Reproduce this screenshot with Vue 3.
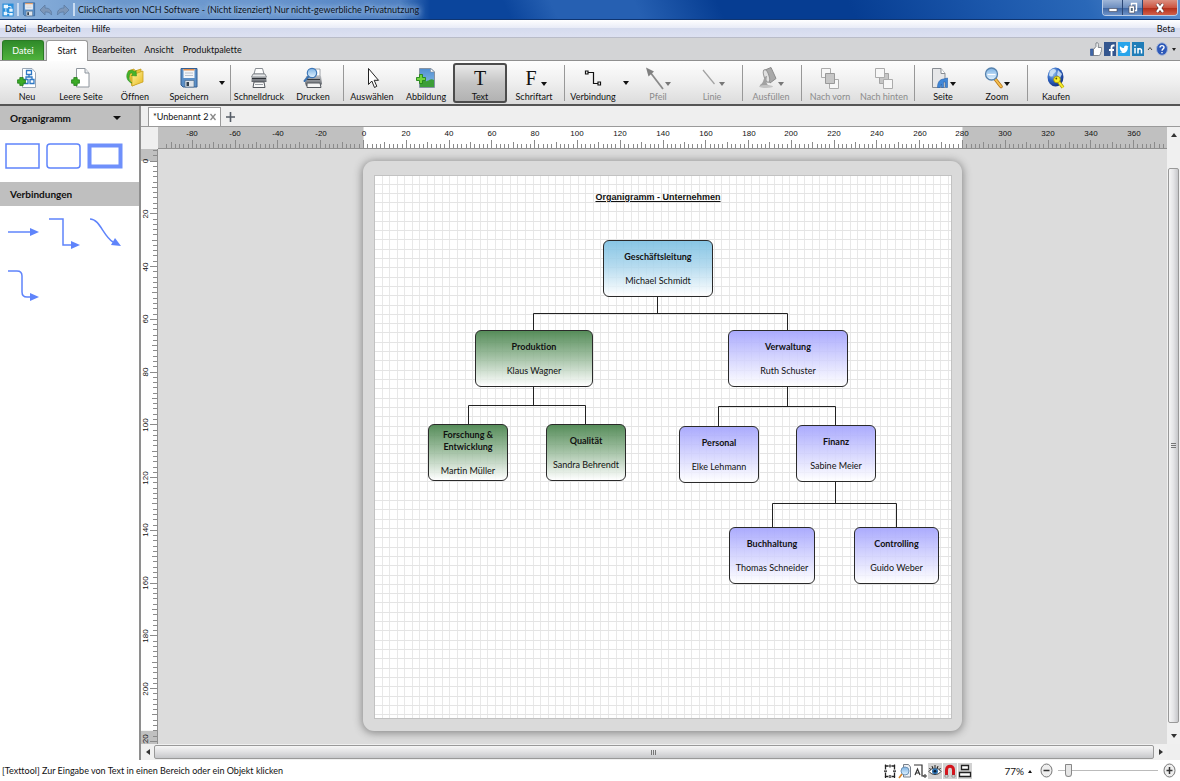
<script setup>
import { ref } from 'vue'

const ribbonTabs = ['Bearbeiten', 'Ansicht', 'Produktpalette']

const tools = [
  { label: 'Neu', icon: 'new' },
  { label: 'Leere Seite', icon: 'blank' },
  { label: 'Öffnen', icon: 'open' },
  { label: 'Speichern', icon: 'save' },
  { split: true, name: 'Speicheroptionen' },
  { sep: true },
  { label: 'Schnelldruck', icon: 'quickprint' },
  { label: 'Drucken', icon: 'print' },
  { sep: true },
  { label: 'Auswählen', icon: 'cursor' },
  { label: 'Abbildung', icon: 'image' },
  { label: 'Text', icon: 'text', active: true },
  { label: 'Schriftart', icon: 'font', menu: true },
  { sep: true },
  { label: 'Verbindung', icon: 'connector' },
  { split: true, name: 'Verbindungsoptionen' },
  { label: 'Pfeil', icon: 'arrow', menu: true, disabled: true },
  { label: 'Linie', icon: 'line', menu: true, disabled: true },
  { sep: true },
  { label: 'Ausfüllen', icon: 'fill', menu: true, disabled: true },
  { sep: true },
  { label: 'Nach vorn', icon: 'front', disabled: true },
  { label: 'Nach hinten', icon: 'back', disabled: true },
  { sep: true },
  { label: 'Seite', icon: 'page', menu: true },
  { label: 'Zoom', icon: 'zoom', menu: true },
  { sep: true },
  { label: 'Kaufen', icon: 'buy' },
]

const statusTools = [
  { icon: 's-frame', name: 'Rahmen' },
  { icon: 's-preview', name: 'Vorschau' },
  { icon: 's-link', name: 'Verbinder' },
  { icon: 's-eye', name: 'Ansicht', on: true },
  { icon: 's-magnet', name: 'Einrasten', on: true },
  { icon: 's-align', name: 'Ausrichten', on: true },
]

/* Ruler scales in pixels per millimetre */
const scaleX = 2.139
const scaleY = 2.638
const rulerWidth = 1600

const range = (from, to, step) => {
  const out = []
  for (let v = from; v <= to; v += step) out.push(v)
  return out
}
const snap = (n) => Math.floor(n) + 0.5
const tickSize = (v, small, mid, large) => (v % 20 === 0 ? large : v % 10 === 0 ? mid : small)

const posX = (v) => rulerWidth / 2 + (v - 140) * scaleX
const posY = (v) => 12 + v * scaleY
const hTicks = range(-92, 374, 2).map((v) => ({ v, p: snap(posX(v)), s: tickSize(v, 4, 6, 8) }))
const hLabels = range(-80, 360, 20).map((v) => ({ v, p: Math.round(posX(v)) }))
const vTicks = range(-4, 220, 2).map((v) => ({ v, p: snap(posY(v)), s: tickSize(v, 4, 5, 7) }))
const vLabels = range(0, 220, 20).map((v) => ({ v, p: Math.round(posY(v)) }))

const gridX = range(0, 75, 1).map((i) => snap(7 + i * 7.55))
const gridY = range(0, 57, 1).map((i) => snap(8 + i * 9.31))

const nodes = [
  { x: 228, y: 64, w: 110, h: 57, kind: 'sky', title: 'Geschäftsleitung', name: 'Michael Schmidt' },
  { x: 100, y: 154, w: 118, h: 57, kind: 'green', title: 'Produktion', name: 'Klaus Wagner' },
  { x: 53, y: 248, w: 80, h: 57, kind: 'green', title: 'Forschung & Entwicklung', name: 'Martin Müller' },
  { x: 171, y: 248, w: 80, h: 57, kind: 'green', title: 'Qualität', name: 'Sandra Behrendt' },
  { x: 353, y: 154, w: 120, h: 57, kind: 'violet', title: 'Verwaltung', name: 'Ruth Schuster' },
  { x: 304, y: 250, w: 80, h: 57, kind: 'violet', title: 'Personal', name: 'Elke Lehmann' },
  { x: 421, y: 249, w: 80, h: 57, kind: 'violet', title: 'Finanz', name: 'Sabine Meier' },
  { x: 354, y: 351, w: 86, h: 57, kind: 'violet', title: 'Buchhaltung', name: 'Thomas Schneider' },
  { x: 479, y: 351, w: 85, h: 57, kind: 'violet', title: 'Controlling', name: 'Guido Weber' },
]
const place = (n) => ({ left: n.x + 'px', top: n.y + 'px', width: n.w + 'px', height: n.h + 'px' })

const zoomLevel = ref(8)
</script>

<template>
  <div class="app">
    <svg class="defs" width="0" height="0" aria-hidden="true">
      <defs>
        <linearGradient id="g-folder" x1="0" y1="0" x2="1" y2="1">
          <stop offset="0" stop-color="#fdf6a0" /><stop offset="1" stop-color="#e9b820" />
        </linearGradient>
        <linearGradient id="g-lens" x1="0" y1="0" x2="0" y2="1">
          <stop offset="0" stop-color="#7cb2e4" /><stop offset="1" stop-color="#e4f4ff" />
        </linearGradient>
        <linearGradient id="g-printer" x1="0" y1="0" x2="0" y2="1">
          <stop offset="0" stop-color="#b9bcc0" /><stop offset="1" stop-color="#5c6066" />
        </linearGradient>
        <radialGradient id="g-globe" cx="0.35" cy="0.3" r="0.8">
          <stop offset="0" stop-color="#9cc6f0" /><stop offset="0.5" stop-color="#2c62c0" /><stop offset="1" stop-color="#0f2a7c" />
        </radialGradient>
        <linearGradient id="g-sky" x1="0" y1="0" x2="0" y2="1">
          <stop offset="0" stop-color="#4f8fd2" /><stop offset="1" stop-color="#8bbbe6" />
        </linearGradient>
      </defs>
      <symbol id="plus" viewBox="0 0 8 8">
        <path d="M2.500 .5h3v2h2v3h-2v2h-3v-2h-2v-3h2z" fill="#3cab26" stroke="#1d7d14" stroke-width=".7" />
      </symbol>
      <symbol id="new" viewBox="0 0 20 24">
        <path d="M5.500 2.500H15l3.500 4v15H5.500z" fill="#fff" stroke="#9aa6b4" />
        <path d="M9.500 4.500h5v4h-5zM7 13.500h4v4H7zM13 13.500h4v4h-4zM12 8.500v2.500M9 13v-2h6v2" fill="none" stroke="#2f78c4" stroke-width="1.300" />
        <use href="#plus" x="0" y="11" width="9" height="9" />
      </symbol>
      <symbol id="blank" viewBox="0 0 20 24">
        <path d="M5.500 2.500H14l4 4.500v14H5.500z" fill="#fff" stroke="#8f969e" />
        <path d="M14 2.500V7h4" fill="#e8ebee" stroke="#8f969e" />
        <use href="#plus" x="0" y="11" width="9" height="9" />
      </symbol>
      <symbol id="open" viewBox="0 0 20 24">
        <path d="M3 5l6-2 1 2 6-2v13l-9 4z" fill="#e8c637" stroke="#c19a1c" stroke-width=".8" />
        <path d="M7 20V9l11-4v11z" fill="url(#g-folder)" stroke="#caa21f" stroke-width=".8" />
        <path d="M2 8c1-4 5-5 8-2l1-1.500.5 5.500-5-.5 1.500-1.500C6 6 4.500 7 4 11c0 3 1 5 3 6-4-1-6-5-5-9z" fill="#46b32c" stroke="#228a16" stroke-width=".5" />
      </symbol>
      <symbol id="save" viewBox="0 0 20 24">
        <path d="M2 2.500h16v18.500H4l-2-2z" fill="#5b8fc7" stroke="#345f92" />
        <path d="M4.500 3h11v9h-11z" fill="#f3f5f8" />
        <path d="M4.500 3h11v1.500h-11z" fill="#e08c4a" />
        <path d="M6 7h8M6 9.500h8" stroke="#b9c2cd" />
        <path d="M6 14.500h9V21H6z" fill="#dfe4ea" stroke="#4b6685" stroke-width=".6" />
        <path d="M7.500 16h2.500v4H7.500z" fill="#35424f" />
      </symbol>
      <symbol id="quickprint" viewBox="0 0 20 24">
        <path d="M5 8l1.500-5.500h7L15 8z" fill="#fff" stroke="#7d8288" stroke-width=".9" />
        <path d="M4 8h12l1.500 3h-15z" fill="#e6e8ea" stroke="#63686e" stroke-width=".7" />
        <path d="M2.500 11h15v5h-15z" fill="url(#g-printer)" />
        <path d="M3 12.500h14" stroke="#2e3237" stroke-width="1.300" />
        <path d="M5 16h10l1 5.500H4z" fill="#f8f8f8" stroke="#55595f" />
        <path d="M6 18.500h8" stroke="#9ba0a6" />
      </symbol>
      <symbol id="print" viewBox="0 0 20 24">
        <path d="M6 10l3-7h8v7z" fill="#fff" stroke="#8a9098" stroke-width=".8" />
        <path d="M3 10h15l1 8-2 2H3l-1-3z" fill="url(#g-printer)" />
        <path d="M4 17h13l1 4.500H4z" fill="#f5f5f5" stroke="#55595f" />
        <path d="M4 13.500h13" stroke="#33373c" />
        <circle cx="9" cy="7" r="4.700" fill="url(#g-lens)" stroke="#3f78b8" stroke-width="1.200" />
        <path d="M5.500 10.500L1.500 15" stroke="#3d73b0" stroke-width="2" stroke-linecap="round" />
      </symbol>
      <symbol id="cursor" viewBox="0 0 20 24">
        <path d="M6.500 2.500v16l3.300-3.500 2.700 6.500 2.300-1.200-2.600-6h4.300z" fill="#fff" stroke="#222" stroke-linejoin="round" />
      </symbol>
      <symbol id="image" viewBox="0 0 20 24">
        <path d="M3.500 2.500H15l3.500 3.500v15.500h-15z" fill="url(#g-sky)" stroke="#8693a3" />
        <path d="M4 14c4-1 6 3 9 0 2-1 3-1 5 0v7H4z" fill="#3c9e38" />
        <path d="M14.500 2.500V6h4z" fill="#fff" stroke="#7a8796" stroke-width=".6" />
        <path d="M3.500 8.500h3v3h3v3h-3v3h-3v-3h-3v-3h3z" fill="#72d53e" stroke="#23851a" stroke-width=".9" />
      </symbol>
      <symbol id="connector" viewBox="0 0 20 24">
        <path d="M5 6.500h5.500v11H15" fill="none" stroke="#111" stroke-width="1.200" />
        <path d="M2.500 5h2.500v3H2.500zM15 16h2.500v3H15z" fill="#fff" stroke="#111" stroke-width="1.200" />
      </symbol>
      <symbol id="arrow" viewBox="0 0 20 24">
        <path d="M5 6l13 17" stroke="#8a8a8a" stroke-width="1.800" />
        <path d="M1 1.500l8 4-5.500 5z" fill="#808080" />
      </symbol>
      <symbol id="line" viewBox="0 0 20 24">
        <path d="M4 4l11.500 14" stroke="#a2a2a2" stroke-width="1.200" />
      </symbol>
      <symbol id="fill" viewBox="0 0 20 24">
        <path d="M7 4l6-2.500 5 11-6 4.500z" fill="#a9a9a9" stroke="#8b8b8b" />
        <ellipse cx="8.500" cy="10" rx="2.500" ry="6.500" transform="rotate(-18 8.500 10)" fill="#e0e0e0" stroke="#959595" />
        <path d="M8 10c-3 2-2 7-6 9-1 2 4 3 10 1-4-1-4-4-3-10z" fill="#a2a2a2" />
        <ellipse cx="8" cy="20.500" rx="7" ry="1.500" fill="#c4c4c4" />
      </symbol>
      <symbol id="front" viewBox="0 0 20 24">
        <path d="M1.500 2.500h9v9h-9zM9.500 13.500h9v9h-9z" fill="#f7f7f7" stroke="#ababab" />
        <path d="M5.500 7.500h9v10h-9z" fill="#c6c6c6" stroke="#999" />
      </symbol>
      <symbol id="back" viewBox="0 0 20 24">
        <path d="M5.500 7.500h9v10h-9z" fill="#c6c6c6" stroke="#a4a4a4" />
        <path d="M1.500 2.500h9v9h-9zM9.500 13.500h9v9h-9z" fill="#f7f7f7" stroke="#ababab" />
      </symbol>
      <symbol id="page" viewBox="0 0 20 24">
        <path d="M2.500 2.500H11l4 5v14H2.500z" fill="#e6e7e9" stroke="#888d93" />
        <path d="M11 2.500v5h4" fill="#fff" stroke="#888d93" />
        <path d="M7.500 21.500c0-5 2-8 6-8.500l4-1v9.500h-2V16h-2v5.500h-2V18l-1.500 3.500z" fill="#3f86d8" stroke="#2560a8" stroke-width=".6" />
      </symbol>
      <symbol id="zoom" viewBox="0 0 20 24">
        <path d="M11.500 13.500l5.500 7" stroke="#b8771b" stroke-width="3.600" stroke-linecap="round" />
        <path d="M11.500 13.500l5.500 7" stroke="#f5c04f" stroke-width="2" stroke-linecap="round" />
        <circle cx="7.500" cy="8" r="6" fill="url(#g-lens)" stroke="#5783ae" stroke-width="1.300" />
        <path d="M3.500 8.500h8" stroke="#fff" stroke-width="1.200" />
      </symbol>
      <symbol id="buy" viewBox="0 0 20 24">
        <ellipse cx="9.500" cy="11" rx="8" ry="9.500" fill="url(#g-globe)" />
        <path d="M4 5c3-3 6-2 6 0s-3 2-3 4-3 2-4 0zM12 4l4 4-2 4-3-3z" fill="#d5e6f5" opacity=".85" />
        <path d="M12 15l5 6.500" stroke="#a89600" stroke-width="3.400" />
        <path d="M12 15l5 6.500" stroke="#f7ee2a" stroke-width="2" />
        <circle cx="11" cy="13.500" r="3.300" fill="#f7ee2a" stroke="#a89600" stroke-width=".8" />
        <circle cx="10.300" cy="12.500" r=".9" fill="#5d5500" />
      </symbol>

      <symbol id="logo" viewBox="0 0 14 16">
        <path d="M.5.500h13v15H.5z" fill="#2a8fdc" />
        <path d="M2 2h5v4H2zM8.500 6.500h4v3.500h-4zM8.500 11.500h4v3h-4zM2 10h4v4H2z" fill="#e8f5ff" />
        <path d="M4.500 6v4M7 4h3.500v2.500M6 12h2.500" fill="none" stroke="#e8f5ff" />
      </symbol>
      <symbol id="undo" viewBox="0 0 14 12">
        <path d="M6 1v3c5 0 7 3 6.500 7C11 8.500 9 7.800 6 8v3L1 6z" fill="#7c96b8" stroke="#5c7ba2" stroke-width=".8" />
      </symbol>

      <symbol id="like" viewBox="0 0 12 14">
        <path d="M.5 7h3v6.500h-3z" fill="#3f66a8" stroke="#2c4e8a" stroke-width=".6" />
        <path d="M3.500 7.500L6 4.500V1c1.500-.8 2.300 0 2.300 1.500v3H11c.8 0 .8 1 .3 1.500.5.700.4 1.200-.2 1.800.3.700.2 1.200-.4 1.700.2.700 0 1.200-.5 1.500 0 1-.5 1.500-1.500 1.500H3.500z" fill="#fff" stroke="#555c66" stroke-width=".7" />
      </symbol>
      <symbol id="facebook" viewBox="0 0 12 14">
        <path d="M0 0h12v14H0z" fill="#34568f" />
        <path d="M10.500 3.500H9.300C8 3.500 7.500 4.200 7.500 5.500V14M5 8h5" fill="none" stroke="#fff" stroke-width="1.800" />
      </symbol>
      <symbol id="twitter" viewBox="0 0 12 14">
        <path d="M0 0h12v14H0z" fill="#28a4ea" />
        <path d="M2 4c1 1.500 2.500 2 4 2 0-2.500 2.500-3 3.500-1.700l1-.3-.7 1.200c.2 3.500-2 5.800-4.800 5.800-1.500 0-2.500-.4-3.200-.9 1 0 1.700-.2 2.200-.7C3 9.200 2.500 8.500 2.500 8 1.700 7 1.700 5 2 4z" fill="#fff" />
      </symbol>
      <symbol id="linkedin" viewBox="0 0 12 14">
        <path d="M0 0h12v14H0z" fill="#1f7db8" />
        <path d="M3 6v5.500M6 6v5.500M6 8.500c0-2.500 3.500-2.500 3.500 0v3M3 3v1.500" fill="none" stroke="#fff" stroke-width="1.500" />
      </symbol>
      <symbol id="help" viewBox="0 0 12 14">
        <ellipse cx="6" cy="7" rx="5.500" ry="6.300" fill="#2d59b8" stroke="#a9b8d8" />
        <path d="M4 5.500C4 3 8 3 8 5.400 8 7 6 6.800 6 8.800M6 10v1.300" fill="none" stroke="#fff" stroke-width="1.400" />
      </symbol>

      <symbol id="s-frame" viewBox="0 0 14 16">
        <path d="M2.500 3h9v10.500h-9z" fill="#fff" stroke="#222" stroke-width="1.300" />
        <path d="M5.500 3h3M5.500 13.500h3M2.500 6.500v3M11.500 6.500v3" stroke="#fff" stroke-width="1.600" />
        <path d="M7 1.500v3M7 12v3M1 8.200h3M10 8.200h3M2.500 1.500v2M11.500 1.500v2M2.500 13v2M11.500 13v2" stroke="#222" stroke-width="1.200" />
      </symbol>
      <symbol id="s-preview" viewBox="0 0 14 16">
        <path d="M5.500 1.500h5l2 2.500v10h-7z" fill="#eef1f5" stroke="#777e88" />
        <circle cx="7" cy="8" r="4" fill="url(#g-lens)" stroke="#6d94b8" />
        <path d="M4 11l-3 4" stroke="#d98324" stroke-width="1.600" />
      </symbol>
      <symbol id="s-link" viewBox="0 0 14 16">
        <path d="M1 2h8v11h2" fill="none" stroke="#333" stroke-width="1.200" />
        <path d="M2 12l2.500-6L7 12M3 10h3" fill="none" stroke="#333" stroke-width="1.200" />
        <path d="M11 12h2v2h-2z" fill="#fff" stroke="#333" />
      </symbol>
      <symbol id="s-eye" viewBox="0 0 14 16">
        <path d="M1 8.500C4 4 10 4 13 8.500 10 12.500 4 12.500 1 8.500z" fill="#fff" stroke="#333" />
        <circle cx="7" cy="8.300" r="3" fill="#2b6fae" /><circle cx="7" cy="8.300" r="1.300" fill="#0b1d30" />
        <path d="M1.500 5l1 1.500M4 3l.7 2M7 2v2.500M10 3l-.7 2M12.500 5l-1 1.500" stroke="#222" />
      </symbol>
      <symbol id="s-magnet" viewBox="0 0 14 16">
        <path d="M3.500 13V7c0-5 7-5 7 0v6" fill="none" stroke="#d5141c" stroke-width="3" />
        <path d="M2 12h3v2H2zM9 12h3v2H9z" fill="#eee" stroke="#555" stroke-width=".5" />
      </symbol>
      <symbol id="s-align" viewBox="0 0 14 16">
        <path d="M3.500 2.500h7v4h-7zM1.500 9.500h11v4h-11z" fill="#fff" stroke="#222" stroke-width="1.300" />
      </symbol>
    </svg>

    <header class="titlebar">
      <svg class="logo"><use href="#logo" /></svg>
      <i class="tb-sep"></i>
      <button class="quick" type="button" aria-label="Speichern"><svg width="14" height="17"><use href="#save" /></svg></button>
      <button class="quick" type="button" aria-label="Rückgängig"><svg width="14" height="12"><use href="#undo" /></svg></button>
      <button class="quick flip" type="button" aria-label="Wiederholen"><svg width="14" height="12"><use href="#undo" /></svg></button>
      <i class="tb-sep"></i>
      <h1>ClickCharts von NCH Software - (Nicht lizenziert) Nur nicht-gewerbliche Privatnutzung</h1>
      <div class="win-buttons">
        <button type="button" aria-label="Minimieren"><svg width="12" height="12" viewBox="0 0 12 12"><path d="M2 6.500h8v3H2z" fill="#fff" stroke="#445" stroke-width=".6" /></svg></button>
        <button type="button" aria-label="Wiederherstellen"><svg width="12" height="12" viewBox="0 0 12 12"><path d="M4.500 1.500h5v7h-5z" fill="none" stroke="#fff" stroke-width="1.400" /><path d="M2 4h5.500v7H2z" fill="#fff" stroke="#445" stroke-width=".6" /><path d="M3.800 6h2v3h-2z" fill="#567" /></svg></button>
        <button type="button" class="close" aria-label="Schließen"><svg width="12" height="12" viewBox="0 0 12 12"><path d="M3 2l6 8M9 2l-6 8" stroke="#533" stroke-width="3.400" /><path d="M3 2l6 8M9 2l-6 8" stroke="#fff" stroke-width="2.200" /></svg></button>
      </div>
    </header>

    <nav class="menubar">
      <button type="button">Datei</button>
      <button type="button">Bearbeiten</button>
      <button type="button">Hilfe</button>
      <span class="beta">Beta</span>
    </nav>

    <div class="ribbon-tabs">
      <button type="button" class="file">Datei</button>
      <button type="button" class="current">Start</button>
      <button v-for="t in ribbonTabs" :key="t" type="button">{{ t }}</button>
      <div class="social">
        <a href="#" aria-label="Gefällt mir"><svg><use href="#like" /></svg></a>
        <a href="#" aria-label="Facebook"><svg><use href="#facebook" /></svg></a>
        <a href="#" aria-label="Twitter"><svg><use href="#twitter" /></svg></a>
        <a href="#" aria-label="LinkedIn"><svg><use href="#linkedin" /></svg></a>
        <button type="button" class="chev" aria-label="Menüband einklappen"><svg viewBox="0 0 6 14"><path d="M1 8l2-2.500L5 8" fill="none" stroke="#444" /></svg></button>
        <button type="button" aria-label="Hilfe"><svg><use href="#help" /></svg></button>
        <button type="button" class="chev" aria-label="Hilfemenü"><svg viewBox="0 0 6 14"><path d="M1 6h4L3 9z" fill="#222" /></svg></button>
      </div>
    </div>

    <div class="toolbar">
      <template v-for="(t, i) in tools" :key="i">
        <i v-if="t.sep" class="sep"></i>
        <button v-else-if="t.split" type="button" class="split" :aria-label="t.name"><i class="caret"></i></button>
        <button v-else type="button" class="tool" :class="{ active: t.active }" :disabled="t.disabled">
          <span class="pic">
            <span v-if="t.icon === 'text'" class="glyph">T</span>
            <span v-else-if="t.icon === 'font'" class="glyph">F</span>
            <svg v-else width="20" height="24"><use :href="'#' + t.icon" /></svg>
            <i v-if="t.menu" class="caret"></i>
          </span>
          <span class="label">{{ t.label }}</span>
        </button>
      </template>
    </div>

    <main class="body">
      <aside class="sidebar">
        <button type="button" class="side-head">Organigramm <i class="caret"></i></button>
        <div class="shapes">
          <button type="button" aria-label="Rechteck"><svg viewBox="0 0 36 28"><path d="M1 2h33v24H1z" fill="#fff" stroke="#5f84fb" stroke-width="1.500" /></svg></button>
          <button type="button" aria-label="Abgerundetes Rechteck"><svg viewBox="0 0 36 28"><rect x="1" y="2" width="33" height="24" rx="3" fill="#fff" stroke="#5f84fb" stroke-width="1.500" /></svg></button>
          <button type="button" aria-label="Doppelrahmen"><svg viewBox="0 0 36 28"><path d="M2.500 3.500h31v21h-31z" fill="#fff" stroke="#6f90fb" stroke-width="4" /></svg></button>
        </div>
        <h2 class="side-head">Verbindungen</h2>
        <div class="links">
          <button type="button" aria-label="Gerader Pfeil"><svg viewBox="0 0 36 36"><path d="M3 18h24" fill="none" stroke="#5f84fb" stroke-width="1.500" /><path d="M25 14l9 4-9 4z" fill="#5f84fb" /></svg></button>
          <button type="button" aria-label="Winkelpfeil"><svg viewBox="0 0 36 36"><path d="M3 5h14v26h9" fill="none" stroke="#5f84fb" stroke-width="1.500" /><path d="M25 27l9 4-9 4z" fill="#5f84fb" /></svg></button>
          <button type="button" aria-label="Kurvenpfeil"><svg viewBox="0 0 36 36"><path d="M3 5c10 0 13 17 23 23" fill="none" stroke="#5f84fb" stroke-width="1.500" /><path d="M28 24l6 8-10-1z" fill="#5f84fb" /></svg></button>
          <button type="button" aria-label="Abgerundeter Winkelpfeil"><svg viewBox="0 0 36 36"><path d="M3 5h9q5 0 5 5v16q0 5 5 5h4" fill="none" stroke="#5f84fb" stroke-width="1.500" /><path d="M25 27l9 4-9 4z" fill="#5f84fb" /></svg></button>
        </div>
      </aside>

      <section class="work">
        <div class="doc-tabs">
          <div class="doc-tab">
            <span>*Unbenannt 2</span>
            <button type="button" aria-label="Tab schließen"><svg width="6" height="8" viewBox="0 0 6 8"><path d="M.5 1l5 6M5.500 1l-5 6" stroke="#888" stroke-width="1.300" /></svg></button>
          </div>
          <button type="button" class="add" aria-label="Neuer Tab"><svg width="9" height="10" viewBox="0 0 9 10"><path d="M0 5h9M4.500 0v10" stroke="#555c66" stroke-width="1.600" /></svg></button>
        </div>

        <div class="panes">
          <div class="corner"></div>
          <div class="ruler-h">
            <svg :width="rulerWidth" height="22">
              <rect :x="posX(0)" y="0" :width="280 * scaleX" height="22" fill="#fff" />
              <line v-for="t in hTicks" :key="t.v" :x1="t.p" :x2="t.p" :y1="21 - t.s" y2="21" stroke="#8b8b8b" />
              <text v-for="l in hLabels" :key="l.v" :x="l.p" y="9" text-anchor="middle">{{ l.v }}</text>
            </svg>
          </div>
          <div class="scroll-v">
            <button type="button" aria-label="Nach oben"><svg width="6" height="4" viewBox="0 0 6 4"><path d="M0 4l3-4 3 4z" fill="#333" /></svg></button>
            <div class="track"><div class="thumb"><i></i></div></div>
            <button type="button" aria-label="Nach unten"><svg width="6" height="4" viewBox="0 0 6 4"><path d="M0 0l3 4 3-4z" fill="#333" /></svg></button>
          </div>
          <div class="ruler-v">
            <svg width="17" height="100%">
              <rect x="0" y="12" width="17" :height="216 * scaleY" fill="#fff" />
              <line v-for="t in vTicks" :key="t.v" :x1="16 - t.s" x2="16" :y1="t.p" :y2="t.p" stroke="#8b8b8b" />
              <text v-for="l in vLabels" :key="l.v" :transform="`translate(7 ${l.p}) rotate(-90)`" text-anchor="middle">{{ l.v }}</text>
            </svg>
          </div>

          <div class="canvas">
            <div class="frame">
              <div class="page">
                <svg class="grid" width="576" height="542">
                  <path v-for="x in gridX" :key="'x' + x" :d="`M${x} 0V542`" stroke="#e8e8e8" />
                  <path v-for="y in gridY" :key="'y' + y" :d="`M0 ${y}H576`" stroke="#e4e4e4" />
                  <g fill="none" stroke="#222" stroke-width="1">
                    <path d="M282.500 121v17M158.500 154v-16.500h254V154" />
                    <path d="M158.500 211v19M93.500 248v-18.500h117V248" />
                    <path d="M412.500 211v19M343.500 250v-19.500h117V249" />
                    <path d="M460.500 306v22M397.500 351v-23.500h124V351" />
                  </g>
                </svg>
                <h3>Organigramm - Unternehmen</h3>
                <div v-for="n in nodes" :key="n.title" class="node" :class="n.kind" :style="place(n)">
                  <b>{{ n.title }}</b>
                  <span>{{ n.name }}</span>
                </div>
              </div>
            </div>
          </div>

          <div class="scroll-h">
            <button type="button" aria-label="Nach links"><svg width="4" height="6" viewBox="0 0 4 6"><path d="M4 0L0 3l4 3z" fill="#333" /></svg></button>
            <div class="track"><div class="thumb"><i></i></div></div>
            <button type="button" aria-label="Nach rechts"><svg width="4" height="6" viewBox="0 0 4 6"><path d="M0 0l4 3-4 3z" fill="#333" /></svg></button>
          </div>
        </div>
      </section>
    </main>

    <footer class="status">
      <span class="hint">[Texttool] Zur Eingabe von Text in einen Bereich oder ein Objekt klicken</span>
      <div class="status-tools">
        <button v-for="s in statusTools" :key="s.icon" type="button" :class="{ on: s.on }" :aria-label="s.name">
          <svg width="14" height="16"><use :href="'#' + s.icon" /></svg>
        </button>
      </div>
      <button type="button" class="percent">77% <svg width="4" height="4" viewBox="0 0 4 4"><path d="M0 4l2-3 2 3z" fill="#111" /></svg></button>
      <button type="button" class="round" aria-label="Verkleinern"><svg width="13" height="15" viewBox="0 0 13 15"><ellipse cx="6.500" cy="7.500" rx="5.500" ry="6.500" fill="#eee" stroke="#777" /><path d="M3.500 7.500h6" stroke="#333" stroke-width="1.500" /></svg></button>
      <input v-model="zoomLevel" type="range" min="0" max="100" aria-label="Zoomstufe" />
      <button type="button" class="round" aria-label="Vergrößern"><svg width="13" height="15" viewBox="0 0 13 15"><ellipse cx="6.500" cy="7.500" rx="5.500" ry="6.500" fill="#eee" stroke="#777" /><path d="M3.500 7.500h6M6.500 4v7" stroke="#333" stroke-width="1.500" /></svg></button>
    </footer>
  </div>
</template>

<style>
html, body { margin: 0; height: 100%; }
#app { height: 100%; }
</style>

<style scoped>
.app {
  height: 100vh;
  display: flex;
  flex-direction: column;
  overflow: hidden;
  background: #fff;
  color: #111;
  font-family: Lato, "Liberation Sans", sans-serif;
  font-size: 9px;
  line-height: 14px;
  font-variant-ligatures: none;
}
* { box-sizing: border-box; }
svg { display: block; flex: none; }
.defs { position: absolute; }
button {
  font: inherit;
  font-variant-ligatures: none;
  color: inherit;
  border: 0;
  padding: 0;
  margin: 0;
  background: none;
  white-space: nowrap;
}
h1, h2, h3 { margin: 0; font-size: inherit; font-weight: normal; }
i { display: block; flex: none; }
.caret {
  border: 3px solid transparent;
  border-top: 4px solid #111;
  border-bottom: 0;
}

.titlebar {
  flex: none;
  height: 20px;
  display: flex;
  align-items: center;
  padding-left: 2px;
  gap: 3px;
  border-bottom: 1px solid #0f3571;
  background:
    linear-gradient(90deg, #8fb4dd 0, #6b97cc 120px, #6c98cf 250px, #4f80c2 400px, #0b469f00 430px),
    linear-gradient(65deg, #0b459c 0 43%, #2660b2 47% 54%, #063d92 61% 72%, #1c58ac 84%, #2a68b8 92%, #5d8fd0 100%);
}
.logo { width: 12px; height: 16px; }
.tb-sep { width: 2px; height: 13px; background: #c9dcf2; }
.flip svg { transform: scaleX(-1); }
h1 {
  flex: 1;
  white-space: nowrap;
  color: #0c1320;
  text-shadow: 0 0 6px #b4cdec, 0 0 6px #b4cdec;
}
.win-buttons {
  display: flex;
  align-self: flex-start;
  margin-right: 2px;
  height: 16px;
  border: 1px solid #b9cce6;
  border-top: 0;
  border-radius: 0 0 4px 4px;
  overflow: hidden;
}
.win-buttons button {
  width: 20px;
  display: grid;
  place-items: center;
  border-right: 1px solid #2b4674;
  background: linear-gradient(#9fb6d8, #6f90c0 50%, #3c639f 51%, #6e93c8);
}
.win-buttons .close {
  width: 34px;
  border-right: 0;
  background: linear-gradient(#dc8f80, #cc5541 50%, #b02a16 51%, #d2604a);
}

.menubar {
  flex: none;
  height: 18px;
  display: flex;
  align-items: center;
  padding: 0 5px;
  gap: 11px;
  background: linear-gradient(#fff, #e9ecf7 45%, #d5dbee 50%, #dde1f2);
  border-bottom: 1px solid #b9bcc8;
}
.beta { margin-left: auto; }

.ribbon-tabs {
  flex: none;
  height: 23px;
  display: flex;
  align-items: flex-end;
  padding: 0 2px;
  background: #d3d4d6;
  border-bottom: 1px solid #8f8f8f;
}
.ribbon-tabs > button { height: 20px; margin-right: 9px; }
.ribbon-tabs > .file {
  width: 42px;
  margin-right: 2px;
  color: #fff;
  border: 1px solid #2a7a24;
  border-bottom: 0;
  border-radius: 3px 3px 0 0;
  background: linear-gradient(#2f8a29, #4fb23c);
}
.ribbon-tabs > .current {
  width: 42px;
  margin-right: 4px;
  height: 21px;
  margin-bottom: -1px;
  border: 1px solid #9a9a9a;
  border-bottom: 0;
  border-radius: 3px 3px 0 0;
  background: #fff;
}
.social { margin-left: auto; height: 22px; display: flex; align-items: center; gap: 2px; }
.social svg { width: 12px; height: 14px; }
.social .chev svg { width: 8px; }

.toolbar {
  flex: none;
  height: 45px;
  display: flex;
  background: linear-gradient(#fdfdfd, #efefef 50%, #dcdcdc);
  border-bottom: 2px solid #555;
}
.tool {
  width: 54px;
  height: 40px;
  margin-top: 2px;
  padding-top: 2px;
  display: flex;
  flex-direction: column;
  align-items: center;
  border: 1px solid transparent;
  border-radius: 3px;
}
.tool.active {
  border: 2px solid #4c4c4c;
  padding-top: 1px;
  background: linear-gradient(#e8e8e8, #c4c4c4 50%, #b2b2b2);
}
.tool:disabled { color: #8b8b8b; }
.tool:disabled .caret { border-top-color: #777; }
.pic { height: 24px; display: flex; align-items: center; }
.pic .caret { margin-top: 12px; }
.glyph { font: 20px/24px "Liberation Serif", serif; color: #111; padding: 0 4px; }
.label { line-height: 14px; }
.split { width: 11px; display: flex; justify-content: center; align-items: center; }
.sep { width: 1px; margin: 4px 1px 3px 3px; background: #989898; }

.body { flex: 1; min-height: 0; display: flex; }
.sidebar {
  flex: none;
  width: 141px;
  border-right: 2px solid #8e8e8e;
  background: #fff;
}
.side-head {
  width: 100%;
  height: 24px;
  display: flex;
  align-items: center;
  justify-content: space-between;
  padding: 0 18px 0 10px;
  background: #bfbfbf;
  font-size: 10px;
  font-weight: bold;
  color: #111;
}
.side-head .caret { border-width: 4px 4px 0; }
.shapes, .links { display: flex; flex-wrap: wrap; padding: 0 5px; gap: 0 5px; }
.shapes { height: 52px; align-items: center; }
.shapes svg { width: 36px; height: 28px; }
.links { padding-top: 8px; gap: 16px 5px; }
.links svg { width: 36px; height: 36px; }

.work { flex: 1; min-width: 0; display: flex; flex-direction: column; }
.doc-tabs {
  flex: none;
  height: 21px;
  display: flex;
  align-items: flex-end;
  padding-left: 7px;
  background: #efefef;
  border-bottom: 1px solid #9a9a9a;
}
.doc-tab {
  width: 73px;
  height: 19px;
  padding: 0 4px;
  display: flex;
  align-items: center;
  justify-content: space-between;
  white-space: nowrap;
  background: #fff;
  border: 1px solid #9a9a9a;
  border-bottom: 0;
}
.add { width: 18px; height: 18px; display: grid; place-items: center; }

.panes {
  flex: 1;
  min-height: 0;
  display: grid;
  grid-template-columns: 17px minmax(0, 1fr) 13px;
  grid-template-rows: 22px minmax(0, 1fr) 16px;
  background: #efefef;
}
.ruler-h {
  overflow: hidden;
  display: flex;
  justify-content: center;
  background: #c0c0c0;
  border-bottom: 1px solid #909090;
}
.ruler-v {
  grid-column: 1;
  overflow: hidden;
  background: #c0c0c0;
  border-right: 1px solid #909090;
}
.panes text { font: 8px "Liberation Sans", Arial, sans-serif; fill: #111; }
.canvas {
  overflow: hidden;
  display: flex;
  justify-content: center;
  align-items: flex-start;
  padding-top: 12px;
  background: #dcdcdc;
}
.frame {
  flex: none;
  padding: 15px 11px 13px 12px;
  border-radius: 11px;
  background: #dadada;
  box-shadow: 0 1px 8px 1px #888;
}
.page {
  position: relative;
  width: 576px;
  height: 542px;
  background: #fff;
  outline: 1px solid #c2c2c2;
}
.grid { position: absolute; inset: 0; }
.page h3 {
  position: relative;
  padding: 14px 10px 0 0;
  text-align: center;
  font-family: "Liberation Sans", Arial, sans-serif;
  font-weight: bold;
  text-decoration: underline;
}
.node {
  position: absolute;
  display: flex;
  flex-direction: column;
  justify-content: center;
  gap: 12px;
  text-align: center;
  line-height: 12px;
  border: 1px solid #2a2a2a;
  border-radius: 6px;
}
.node span { white-space: nowrap; }
.sky { background: linear-gradient(#7cc0e2e8, #a9d5ecdd 45%, #ffffffd0); }
.green { background: linear-gradient(#4c8650f0, #8fb491dd 45%, #ffffffd0); }
.violet { background: linear-gradient(#a6a6fdf0, #cbcbfedd 45%, #ffffffd0); }

.scroll-v, .scroll-h { display: flex; align-items: center; background: #f0f0f0; }
.scroll-v { grid-column: 3; grid-row: 1 / 3; flex-direction: column; }
.scroll-h { grid-column: 1 / 3; }
.scroll-v button, .scroll-h button { width: 13px; height: 16px; display: grid; place-items: center; }
.track { flex: 1; display: flex; }
.scroll-v .track { width: 100%; padding: 25px 1px 5px; }
.scroll-h .track { height: 100%; padding: 1px 0; }
.thumb {
  flex: 1;
  display: grid;
  place-items: center;
  border: 1px solid #999;
  border-radius: 2px;
  background: linear-gradient(90deg, #f6f6f6, #e4e4e6 50%, #c6c7ca);
}
.scroll-h .thumb { background: linear-gradient(#f6f6f6, #e0e0e2 50%, #c6c7ca); }
.thumb i { width: 5px; height: 6px; background: repeating-linear-gradient(#777 0 1px, transparent 1px 2px); }
.scroll-h .thumb i { width: 6px; height: 5px; background: repeating-linear-gradient(90deg, #777 0 1px, transparent 1px 2px); }

.status {
  flex: none;
  height: 21px;
  display: flex;
  align-items: center;
  padding: 0 4px 0 2px;
  background: #fff;
}
.hint { flex: 1; white-space: nowrap; }
.status-tools { display: flex; gap: 1px; margin-right: 32px; }
.status-tools .on { background: #d2d2d2; }
.percent { display: flex; align-items: center; gap: 4px; font-size: 10px; margin-right: 8px; }
input[type="range"] {
  appearance: none;
  width: 100px;
  height: 16px;
  margin: 0 5px;
  background: linear-gradient(#bbb, #bbb) center / 100% 1px no-repeat;
}
input[type="range"]::-webkit-slider-thumb {
  appearance: none;
  width: 7px;
  height: 13px;
  border: 1px solid #888;
  border-radius: 1px 1px 4px 4px;
  background: #e6e6e6;
}
</style>
